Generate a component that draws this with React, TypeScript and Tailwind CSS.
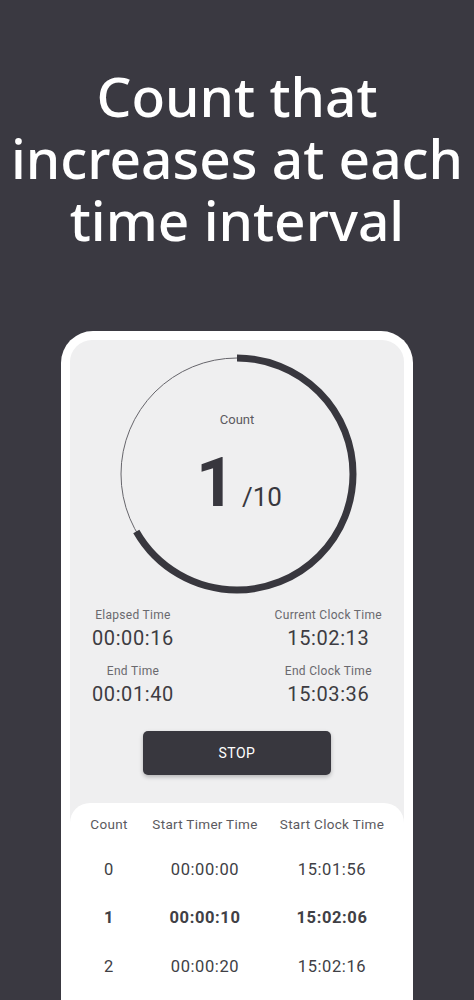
import React from 'react';

const rows = [
  { n: '0', timer: '00:00:00', clock: '15:01:56', active: false },
  { n: '1', timer: '00:00:10', clock: '15:02:06', active: true },
  { n: '2', timer: '00:00:20', clock: '15:02:16', active: false },
];

function CountRing() {
  const r = 116;
  const c = 2 * Math.PI * r;
  const done = c * (2 / 3);
  return (
    <div className="relative mx-auto h-[240px] w-[240px]">
      <svg className="absolute inset-0" width="240" height="240" viewBox="0 0 240 240">
        <circle cx="120" cy="120" r={r} fill="none" stroke="#66656b" strokeWidth="1" />
        <circle
          cx="120"
          cy="120"
          r={r}
          fill="none"
          stroke="#38373e"
          strokeWidth="7"
          strokeDasharray={`${done} ${c}`}
          transform="rotate(-90 120 120)"
        />
      </svg>
      <div className="relative flex h-full flex-col items-center pt-[56px]">
        <div className="text-[13px] text-[#5b5a60]">Count</div>
        <div className="mt-[23px] flex items-baseline pl-[4px] text-[#38373e]">
          <span className="text-[68px] font-bold leading-[60px]">1</span>
          <span className="ml-[7px] text-[26px] leading-none">/10</span>
        </div>
      </div>
    </div>
  );
}

function Stat({ label, value }: { label: string; value: string }) {
  return (
    <div className="flex flex-col items-center">
      <div className="text-[12px] leading-[16px] tracking-[0.3px] text-[#6a696e]">{label}</div>
      <div className="mt-[4px] text-[20px] leading-[22px] tracking-[0.6px] text-[#3d3c42]">{value}</div>
    </div>
  );
}

export default function App() {
  return (
    <div
      className="h-[1000px] overflow-hidden bg-[#3a3941]"
      style={{ fontFamily: 'Roboto, "Liberation Sans", sans-serif' }}
    >
      <h1
        className="pt-[65px] text-center text-[55px] font-medium leading-[62px] text-white"
        style={{ fontFamily: '"Noto Sans", sans-serif' }}
      >
        Count that
        <br />
        increases at each
        <br />
        time interval
      </h1>

      <div className="mx-auto mt-[80px] w-[352px] rounded-t-[32px] bg-white px-[9px] pt-[9px] pb-[40px]">
        <div className="rounded-[22px] bg-[#efeff0] pt-[14px]">
          <CountRing />

          <div className="mt-[13px] flex justify-between px-[22px]">
            <div className="flex flex-col gap-[14px]">
              <Stat label="Elapsed Time" value="00:00:16" />
              <Stat label="End Time" value="00:01:40" />
            </div>
            <div className="flex flex-col gap-[14px]">
              <Stat label="Current Clock Time" value="15:02:13" />
              <Stat label="End Clock Time" value="15:03:36" />
            </div>
          </div>

          <div className="mt-[26px] flex justify-center">
            <button className="h-[44px] w-[188px] rounded-[5px] bg-[#38373e] text-[14px] tracking-[0.5px] text-white shadow-[0_2px_4px_rgba(0,0,0,0.25)]">
              STOP
            </button>
          </div>

          <div className="mt-[28px] rounded-t-[20px] bg-white pt-[11px]">
            <div className="grid grid-cols-[78px_114px_140px] text-center text-[13.5px] leading-[20px] tracking-[0.3px] text-[#5b5a60]">
              <div>Count</div>
              <div>Start Timer Time</div>
              <div>Start Clock Time</div>
            </div>
            <div className="mt-[12px]">
              {rows.map((row) => (
                <div
                  key={row.n}
                  className={`grid h-[48.5px] grid-cols-[78px_114px_140px] items-center text-center text-[16.5px] tracking-[0.6px] text-[#404045] ${
                    row.active ? 'font-bold' : ''
                  }`}
                >
                  <div>{row.n}</div>
                  <div>{row.timer}</div>
                  <div>{row.clock}</div>
                </div>
              ))}
            </div>
          </div>
        </div>
      </div>
    </div>
  );
}
